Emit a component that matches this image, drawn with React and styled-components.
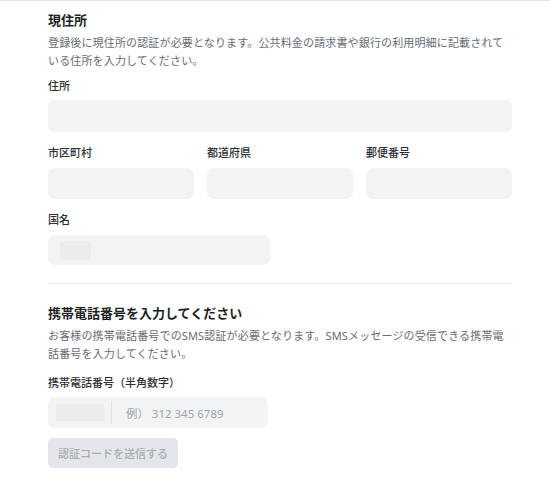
import React from 'react';
import styled, { createGlobalStyle } from 'styled-components';

const GlobalStyle = createGlobalStyle`
  html, body {
    margin: 0;
    padding: 0;
    background: #ffffff;
  }
  body {
    font-family: "Noto Sans", "Noto Sans CJK JP", sans-serif;
    color: #1f2329;
  }
`;

const Page = styled.div`
  border-top: 1px solid #e3e4e6;
  padding: 9px 38px 0 48px;
  width: 464px;
`;

const Section = styled.section`
  display: flex;
  flex-direction: column;
`;

const Heading = styled.h2`
  margin: 0;
  font-size: 13px;
  line-height: 20px;
  font-weight: 700;
  color: #1c1f24;
`;

const Description = styled.p`
  margin: 4px 0 0;
  font-size: 11px;
  line-height: 18px;
  letter-spacing: 0.15px;
  color: #676c74;
`;

const Field = styled.div`
  display: flex;
  flex-direction: column;
  margin-top: ${(p) => p.$top || 13}px;
  width: ${(p) => (p.$width ? `${p.$width}px` : 'auto')};
`;

const Label = styled.label`
  font-size: 11px;
  line-height: 16px;
  font-weight: 500;
  color: #2c3036;
  margin-bottom: ${(p) => p.$gap || 7}px;
`;

const Input = styled.div`
  height: ${(p) => p.$height || 31}px;
  border-radius: 7px;
  background: #f2f3f5;
  display: flex;
  align-items: center;
  padding: 0 ${(p) => p.$pad || 0}px;
  box-sizing: border-box;
`;

const Row = styled.div`
  display: grid;
  grid-template-columns: repeat(3, 1fr);
  column-gap: 13px;
`;

const Blurred = styled.span`
  display: block;
  width: ${(p) => p.$w}px;
  height: ${(p) => p.$h}px;
  background: #ebecee;
  border-radius: 2px;
  filter: blur(0.6px);
`;

const Divider = styled.hr`
  border: none;
  border-top: 1px solid #ebecee;
  margin: 18px 0 19px;
`;

const CodeSep = styled.span`
  width: 1px;
  height: 23px;
  background: #e1e2e5;
  margin: 0 14px 0 7px;
`;

const Placeholder = styled.span`
  font-size: 11.3px;
  color: #9ea2a9;
  letter-spacing: 0.1px;
  white-space: pre;
`;

const SendButton = styled.button`
  margin-top: 10px;
  align-self: flex-start;
  height: 30px;
  padding: 0 10px;
  border: none;
  border-radius: 5px;
  background: #e4e6e9;
  color: #a8acb3;
  font-family: inherit;
  font-size: 11px;
  font-weight: 500;
  cursor: not-allowed;
`;

export default function App() {
  return (
    <>
      <GlobalStyle />
      <Page>
        <Section>
          <Heading>現住所</Heading>
          <Description>
            登録後に現住所の認証が必要となります。公共料金の請求書や銀行の利用明細に記載されている住所を入力してください。
          </Description>
          <Field $top={8}>
            <Label $gap={6}>住所</Label>
            <Input $height={32} />
          </Field>
          <Row>
            <Field>
              <Label>市区町村</Label>
              <Input />
            </Field>
            <Field>
              <Label>都道府県</Label>
              <Input />
            </Field>
            <Field>
              <Label>郵便番号</Label>
              <Input />
            </Field>
          </Row>
          <Field $width={222}>
            <Label>国名</Label>
            <Input $height={30} $pad={12}>
              <Blurred $w={31} $h={19} />
            </Input>
          </Field>
        </Section>

        <Divider />

        <Section>
          <Heading>携帯電話番号を入力してください</Heading>
          <Description>
            お客様の携帯電話番号でのSMS認証が必要となります。SMSメッセージの受信できる携帯電話番号を入力してください。
          </Description>
          <Field $top={12} $width={220}>
            <Label $gap={6}>携帯電話番号（半角数字）</Label>
            <Input $pad={8}>
              <Blurred $w={48} $h={17} />
              <CodeSep />
              <Placeholder>例） 312 345 6789</Placeholder>
            </Input>
          </Field>
          <SendButton disabled>認証コードを送信する</SendButton>
        </Section>
      </Page>
    </>
  );
}
